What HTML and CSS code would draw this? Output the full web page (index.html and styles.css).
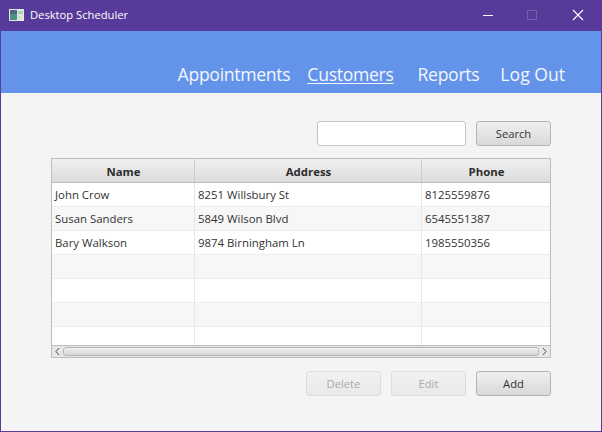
FILE: index.html
```html
<!DOCTYPE html>
<html lang="en">
<head>
<meta charset="utf-8">
<title>Desktop Scheduler</title>
<link rel="stylesheet" href="styles.css">
</head>
<body>
<div class="window">
  <div class="titlebar">
    <svg class="app-icon" width="15" height="12" viewBox="0 0 15 12"><rect width="15" height="12" fill="#dfe8e2"/><rect x="1" y="1" width="7" height="10" fill="#4f8f86"/><rect x="1" y="1" width="7" height="4" fill="#4d6a80"/><rect x="9" y="2" width="5" height="3" fill="#a9d3b0"/><rect x="9" y="7" width="3" height="3" fill="#c4e2c8"/></svg>
    <span class="app-title">Desktop Scheduler</span>
    <div class="win-controls">
      <svg class="ctl" width="46" height="30" viewBox="0 0 46 30"><path d="M19 15.5h10" stroke="#fff" stroke-width="1" fill="none"/></svg>
      <svg class="ctl" width="46" height="30" viewBox="0 0 46 30"><rect x="17.5" y="10.5" width="9" height="9" stroke="#75609f" fill="none"/></svg>
      <svg class="ctl" width="46" height="30" viewBox="0 0 46 30"><path d="M17 10l10 10M27 10l-10 10" stroke="#fff" stroke-width="1.1" fill="none"/></svg>
    </div>
  </div>
  <nav class="nav">
    <a class="nav-item nav-appts">Appointments</a>
    <a class="nav-item nav-cust">Customers</a>
    <a class="nav-item nav-reports">Reports</a>
    <a class="nav-item nav-logout">Log Out</a>
  </nav>
  <main class="content">
    <div class="search-row">
      <input class="search-input" type="text">
      <button class="btn">Search</button>
    </div>
    <div class="table">
      <div class="row head">
        <div class="cell name">Name</div>
        <div class="cell addr">Address</div>
        <div class="cell phone">Phone</div>
      </div>
      <div class="rows">
        <div class="row"><div class="cell name">John Crow</div><div class="cell addr">8251 Willsbury St</div><div class="cell phone">8125559876</div></div>
        <div class="row odd"><div class="cell name">Susan Sanders</div><div class="cell addr">5849 Wilson Blvd</div><div class="cell phone">6545551387</div></div>
        <div class="row"><div class="cell name">Bary Walkson</div><div class="cell addr">9874 Birningham Ln</div><div class="cell phone">1985550356</div></div>
        <div class="row odd"><div class="cell name"></div><div class="cell addr"></div><div class="cell phone"></div></div>
        <div class="row"><div class="cell name"></div><div class="cell addr"></div><div class="cell phone"></div></div>
        <div class="row odd"><div class="cell name"></div><div class="cell addr"></div><div class="cell phone"></div></div>
        <div class="row"><div class="cell name"></div><div class="cell addr"></div><div class="cell phone"></div></div>
      </div>
      <div class="scrollbar">
        <svg class="arrow" width="11" height="11" viewBox="0 0 11 11"><path d="M7 2L4 5.5 7 9" stroke="#555" fill="none"/></svg>
        <div class="thumb"></div>
        <svg class="arrow" width="11" height="11" viewBox="0 0 11 11"><path d="M4 2l3 3.5L4 9" stroke="#555" fill="none"/></svg>
      </div>
    </div>
    <div class="action-row">
      <button class="btn" disabled>Delete</button>
      <button class="btn" disabled>Edit</button>
      <button class="btn">Add</button>
    </div>
  </main>
</div>
</body>
</html>
```
FILE: styles.css
```css
* { box-sizing: border-box; }
html, body { margin: 0; padding: 0; }
body { width: 602px; height: 432px; overflow: hidden; font-family: "Open Sans", "Noto Sans", "Liberation Sans", sans-serif; }
.window { width: 602px; height: 432px; display: flex; flex-direction: column; border: 1px solid #583b9b; border-top: 0; background: #f4f4f4; }
.titlebar { height: 31px; flex: none; display: flex; align-items: center; background: #583a9a; color: #fff; padding-left: 8px; margin: 0 -1px; }
.app-icon { flex: none; margin-left: 1px; margin-top: -2px; }
.app-title { font-size: 11.2px; margin-left: 6px; margin-top: -2px; }
.win-controls { margin-left: auto; display: flex; margin-top: -1px; }
.ctl { display: block; }
.nav { height: 62px; flex: none; display: flex; align-items: flex-end; justify-content: flex-end; background: #6494ea; padding: 0 36px 5px 0; color: #f3f6fd; font-size: 17.6px; }
.nav-item { line-height: 28px; letter-spacing: -0.3px; }
.nav-appts { margin-right: 17px; }
.nav-cust { margin-right: 24px; text-decoration: underline; text-decoration-thickness: 1px; text-underline-offset: 2px; }
.nav-reports { margin-right: 21px; }
.nav-logout { letter-spacing: 0; }
.content { flex: 1; display: flex; flex-direction: column; padding: 28px 50px 0; }
.search-row, .action-row { display: flex; justify-content: flex-end; gap: 10px; }
.search-input { width: 149px; height: 25px; background: #fff; border: 1px solid #c4c4c4; border-radius: 3px; outline: 0; }
.btn { width: 75px; height: 25px; padding: 0; font: 11.2px "Open Sans", "Noto Sans", sans-serif; color: #333; border: 1px solid #b4b4b4; border-radius: 3px; background: linear-gradient(#efefef, #d9d9d9); }
.btn:disabled { color: #a9a9a9; border-color: #dcdcdc; background: linear-gradient(#f1f1f1, #e9e9e9); }
.table { margin-top: 12px; height: 200px; border: 1px solid #bdbdbd; background: #fff; display: flex; flex-direction: column; }
.rows { flex: 1; min-height: 0; overflow: hidden; }
.row { display: flex; height: 24px; background: #fff; border-bottom: 1px solid #ededed; }
.row.odd { background: #f7f7f7; }
.cell { font-size: 11.4px; line-height: 23px; color: #333; padding-left: 3px; border-right: 1px solid #e6e6e6; white-space: nowrap; }
.name { width: 143px; }
.addr { width: 227px; }
.phone { width: 128px; border-right: 0; }
.head { background: linear-gradient(#f0f0f0, #dcdcdc); border-bottom: 1px solid #bdbdbd; flex: none; }
.head .cell { font-weight: 700; text-align: center; border-right-color: #cbcbcb; padding-left: 1px; line-height: 25px; color: #2e2e2e; }
.scrollbar { flex: none; height: 12px; display: flex; align-items: center; background: #e6e6e6; border-top: 1px solid #bdbdbd; }
.arrow { flex: none; }
.thumb { flex: 1; height: 9px; border: 1px solid #b4b4b4; border-radius: 3px; background: linear-gradient(#f0f0f0, #d6d6d6); }
.action-row { margin-top: 13px; }
```
